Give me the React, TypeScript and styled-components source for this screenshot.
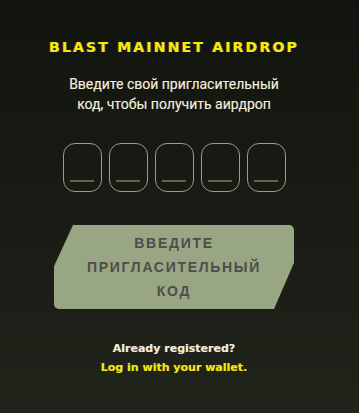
import React from "react";
import styled, { createGlobalStyle } from "styled-components";

const Global = createGlobalStyle`
  html, body { margin: 0; padding: 0; background: #12140f; }
  * { box-sizing: border-box; }
`;

const Page = styled.div`
  min-height: 413px;
  width: 100%;
  background: linear-gradient(180deg, #12140f 0%, #181a13 45%, #21241b 100%);
  display: flex;
  flex-direction: column;
  align-items: center;
  padding: 40px 11px 0 0;
`;

const Title = styled.h1`
  margin: 0;
  font-family: "DejaVu Sans", sans-serif;
  font-weight: 700;
  font-size: 14px;
  line-height: 14px;
  letter-spacing: 2.2px;
  color: #f2ee00;
  text-shadow: -1px 0 rgba(255, 40, 40, 0.55), 1px 0 rgba(0, 220, 255, 0.35);
`;

const Subtitle = styled.p`
  margin: 20px 0 0;
  font-family: Roboto, "Noto Sans", sans-serif;
  font-size: 14px;
  line-height: 20px;
  color: #f3efd6;
  text-align: center;
  text-shadow: -0.6px 0 rgba(255, 60, 60, 0.35), 0.6px 0 rgba(0, 220, 255, 0.3);
`;

const CodeRow = styled.div`
  display: flex;
  gap: 7px;
  margin-top: 29px;
`;

const CodeBox = styled.div`
  width: 39px;
  height: 49px;
  border: 1px solid #9aa17c;
  border-radius: 12px;
  display: flex;
  align-items: flex-end;
  justify-content: center;
  padding-bottom: 9px;
`;

const Underline = styled.div`
  width: 24px;
  height: 2px;
  background: #5e6250;
`;

const Submit = styled.button`
  margin-top: 33px;
  width: 240px;
  height: 84px;
  border: none;
  border-radius: 5px;
  background: #99a683;
  clip-path: polygon(19px 0, 100% 0, 100% 45%, calc(100% - 20px) 100%, 0 100%, 0 49%);
  font-family: "Liberation Sans", Arial, sans-serif;
  font-weight: 700;
  font-size: 14px;
  letter-spacing: 1.7px;
  line-height: 24px;
  color: #4d4e4a;
  text-align: center;
  padding: 0;
  display: flex;
  flex-direction: column;
  align-items: center;
  justify-content: center;
`;

const Footer = styled.div`
  margin-top: 30px;
  display: flex;
  flex-direction: column;
  align-items: center;
  font-family: "DejaVu Sans", sans-serif;
  font-weight: 700;
  font-size: 11px;
  line-height: 19px;
`;

const FooterLine = styled.span<{ $accent?: boolean }>`
  color: ${(p) => (p.$accent ? "#f0ec00" : "#f1efdc")};
  text-shadow: -0.7px 0 rgba(255, 40, 40, 0.45), 0.7px 0 rgba(0, 220, 255, 0.3);
`;

export default function App() {
  return (
    <>
      <Global />
      <Page>
        <Title>BLAST MAINNET AIRDROP</Title>
        <Subtitle>
          Введите свой пригласительный
          <br />
          код, чтобы получить аирдроп
        </Subtitle>
        <CodeRow>
          {[0, 1, 2, 3, 4].map((i) => (
            <CodeBox key={i}>
              <Underline />
            </CodeBox>
          ))}
        </CodeRow>
        <Submit>
          <span>ВВЕДИТЕ</span>
          <span>ПРИГЛАСИТЕЛЬНЫЙ</span>
          <span>КОД</span>
        </Submit>
        <Footer>
          <FooterLine>Already registered?</FooterLine>
          <FooterLine $accent>Log in with your wallet.</FooterLine>
        </Footer>
      </Page>
    </>
  );
}
